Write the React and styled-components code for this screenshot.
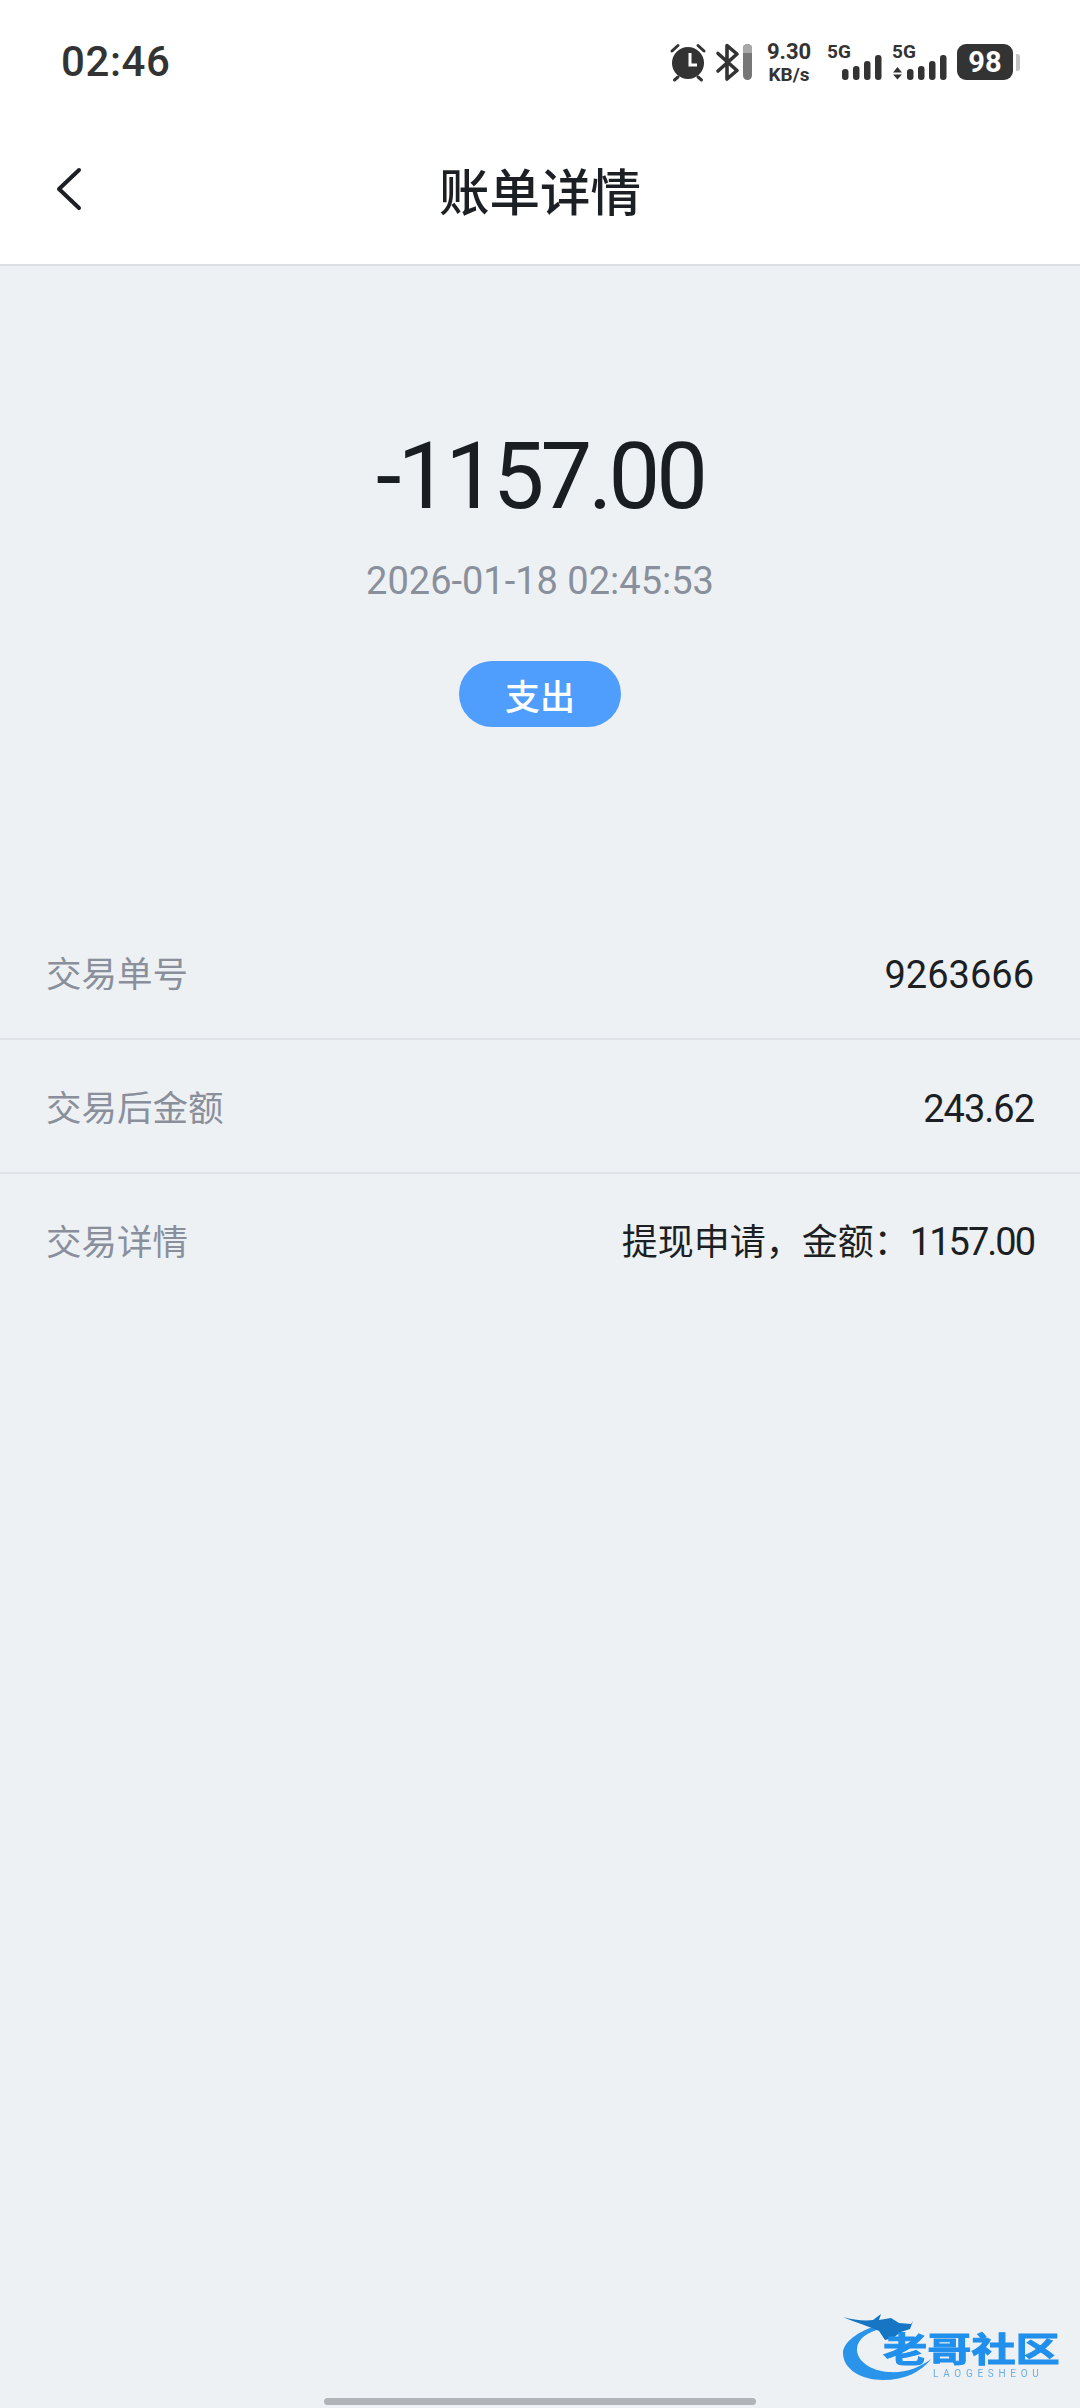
import React from "react";
import styled, { createGlobalStyle } from "styled-components";

const GlobalStyle = createGlobalStyle`
  html, body {
    margin: 0;
    padding: 0;
    background: #edf1f3;
  }
  * {
    box-sizing: border-box;
  }
`;

const FONT = `Roboto, "Noto Sans CJK SC", "Noto Sans", sans-serif`;

const Page = styled.div`
  position: relative;
  width: 1080px;
  height: 2408px;
  overflow: hidden;
  background: #edf1f3;
  font-family: ${FONT};
`;

const Header = styled.header`
  height: 266px;
  background: #fff;
  border-bottom: 2px solid #dcdfe3;
`;

const StatusBar = styled.div`
  height: 124px;
  padding: 0 67px 0 61px;
  display: flex;
  align-items: center;
  justify-content: space-between;
  color: #333;
`;

const Clock = styled.div`
  font-size: 42px;
  font-weight: 500;
  letter-spacing: 0.6px;
  line-height: 1;
`;

const StatusIcons = styled.div`
  display: flex;
  align-items: center;
  height: 40px;
`;

const Glyph = styled.svg`
  display: block;
  flex: none;
  overflow: visible;
  margin-left: ${(p) => p.$left || 0}px;
`;

const NetSpeed = styled.div`
  width: 46px;
  margin: 0 15px 0 14px;
  display: flex;
  flex-direction: column;
  align-items: center;
  font-weight: 700;
  line-height: 1;
  span:first-child {
    font-size: 22px;
    margin-bottom: 2px;
  }
  span:last-child {
    font-size: 19px;
  }
`;

const SignalLabel = styled.text`
  font-family: ${FONT};
  font-size: 19px;
  font-weight: 700;
  fill: #333;
`;

const Battery = styled.div`
  position: relative;
  width: 56px;
  height: 36px;
  border-radius: 9px;
  background: #333;
  color: #fff;
  font-size: 29px;
  font-weight: 700;
  display: flex;
  align-items: center;
  justify-content: center;
  margin-left: 9px;
  &::after {
    content: "";
    position: absolute;
    right: -7px;
    top: 10px;
    width: 4px;
    height: 17px;
    border-radius: 0 3px 3px 0;
    background: #c4c4c4;
  }
`;

const NavBar = styled.div`
  position: relative;
  height: 140px;
  padding-bottom: 11px;
  display: flex;
  align-items: center;
  justify-content: center;
`;

const BackButton = styled.svg`
  position: absolute;
  left: 56px;
  top: 43px;
`;

const Title = styled.h1`
  margin: 0;
  font-size: 50.5px;
  font-weight: 500;
  color: #1c1f23;
`;

const Summary = styled.section`
  padding-top: 156px;
  height: 640px;
  display: flex;
  flex-direction: column;
  align-items: center;
`;

const Amount = styled.div`
  font-size: 92px;
  line-height: 110px;
  color: #191e23;
  letter-spacing: -4px;
`;

const DateText = styled.div`
  margin-top: 25px;
  font-size: 38px;
  line-height: 48px;
  color: #8a8f9c;
`;

const TypeTag = styled.div`
  margin-top: 56px;
  width: 162px;
  height: 66px;
  border-radius: 33px;
  background: #4f9dfc;
  color: #fff;
  font-size: 35px;
  font-weight: 500;
  display: flex;
  align-items: center;
  justify-content: center;
`;

const Rows = styled.section`
  display: flex;
  flex-direction: column;
`;

const Row = styled.div`
  height: 134px;
  padding: 5px 46px 0;
  display: flex;
  align-items: center;
  justify-content: space-between;
  border-bottom: 2px solid ${(p) => (p.$last ? "transparent" : "#dfe3e8")};
`;

const RowLabel = styled.span`
  color: #8a8f9c;
  font-size: 35.5px;
  line-height: 44px;
`;

const RowValue = styled.span`
  color: #1c1f23;
  font-size: 38px;
  line-height: 44px;
  letter-spacing: ${(p) => p.$spacing || 0}px;
`;

const ValuePrefix = styled.span`
  font-size: 36px;
  letter-spacing: 0;
`;

const Watermark = styled.div`
  position: absolute;
  left: 843px;
  top: 2313px;
  width: 222px;
  height: 70px;
  filter: blur(0.7px);
`;

const DragonSvg = styled.svg`
  position: absolute;
  left: 0;
  top: 0;
`;

const LogoText = styled.div`
  position: absolute;
  left: 40px;
  top: 20px;
  font-size: 34px;
  line-height: 34px;
  font-weight: 700;
  white-space: nowrap;
  transform: scaleX(1.3);
  transform-origin: left center;
  color: #2190ec;
  -webkit-text-stroke: 1px #2190ec;
`;

const LogoSub = styled.div`
  position: absolute;
  left: 90px;
  top: 56px;
  font-size: 10px;
  line-height: 10px;
  letter-spacing: 4.7px;
  color: #6aaee6;
  white-space: nowrap;
`;

const HomeBar = styled.div`
  position: absolute;
  left: 324px;
  bottom: 3px;
  width: 432px;
  height: 7px;
  border-radius: 3.5px;
  background: #b0b4b8;
`;

const AlarmIcon = () => (
  <Glyph width="36" height="38" viewBox="0 0 36 38">
    <circle cx="17" cy="20" r="16" fill="#333" />
    <path d="M19 10v12h7" fill="none" stroke="#fff" strokeWidth="3" />
    <path d="M1 8 7 2.500M33 8 27 2.500M7 34 3.500 37M27 34l3.500 3" fill="none" stroke="#333" strokeWidth="3" strokeLinecap="round" />
  </Glyph>
);

const BluetoothIcon = () => (
  <Glyph $left={9} width="24" height="38" viewBox="0 0 24 38">
    <path d="M2 10.500 21 27.500 11 36V2.500l10 8.500L2 28" fill="none" stroke="#333" strokeWidth="3.600" strokeLinejoin="round" strokeLinecap="round" />
  </Glyph>
);

const LevelBar = () => (
  <Glyph $left={3} width="9" height="36" viewBox="0 0 9 36">
    <rect width="9" height="36" rx="4.500" fill="#777" />
    <path d="M0 9V4.500a4.500 4.500 0 0 1 9 0V9z" fill="#a8a8a8" />
  </Glyph>
);

const bars = [
  { x: 0, h: 11 },
  { x: 11, h: 14 },
  { x: 22, h: 19 },
  { x: 33, h: 25 },
];

const SignalIcon = ({ arrows, left }) => (
  <Glyph $left={left} width={arrows ? 56 : 55} height="38" viewBox={arrows ? "0 0 56 38" : "0 0 55 38"}>
    <SignalLabel x="0" y="15">5G</SignalLabel>
    {arrows && <path d="M5.500 24 10 29.500H1zM5.500 36.500 1 31.500h9z" fill="#333" />}
    {bars.map((b) => (
      <rect key={b.x} x={15 + b.x} y={37 - b.h} width="6.500" height={b.h} rx="3" fill="#333" />
    ))}
  </Glyph>
);

const DragonLogo = () => (
  <DragonSvg width="100" height="70" viewBox="0 0 100 70">
    <path
      d="M36 12C14 18 0 30 0 40c0 16 18 27 40 27 22 0 38-8 48-21-12 9-26 14-42 13C28 58 13 48 14 35 15 26 24 19 38 16z"
      fill="#2a94ea"
    />
    <path
      d="M0 4C10 7 22 8 30 7L38 1 36 7 48 5l8 5 12 1 2-3-3 8-9 3-8 6-8 2-6-9C28 14 14 10 0 4z"
      fill="#1676c4"
    />
  </DragonSvg>
);

const App = () => {
  return (
    <Page>
      <GlobalStyle />
      <Header>
        <StatusBar>
          <Clock>02:46</Clock>
          <StatusIcons>
            <AlarmIcon />
            <BluetoothIcon />
            <LevelBar />
            <NetSpeed>
              <span>9.30</span>
              <span>KB/s</span>
            </NetSpeed>
            <SignalIcon />
            <SignalIcon arrows left={10} />
            <Battery>98</Battery>
          </StatusIcons>
        </StatusBar>
        <NavBar>
          <BackButton width="26" height="44" viewBox="0 0 26 44">
            <path d="M23 3 3 22l20 19" fill="none" stroke="#1c1f23" strokeWidth="4" strokeLinecap="round" strokeLinejoin="round" />
          </BackButton>
          <Title>账单详情</Title>
        </NavBar>
      </Header>
      <Summary>
        <Amount>-1157.00</Amount>
        <DateText>2026-01-18 02:45:53</DateText>
        <TypeTag>支出</TypeTag>
      </Summary>
      <Rows>
        <Row>
          <RowLabel>交易单号</RowLabel>
          <RowValue>9263666</RowValue>
        </Row>
        <Row>
          <RowLabel>交易后金额</RowLabel>
          <RowValue $spacing={-1}>243.62</RowValue>
        </Row>
        <Row $last>
          <RowLabel>交易详情</RowLabel>
          <RowValue $spacing={-2}>
            <ValuePrefix>提现申请，金额：</ValuePrefix>1157.00
          </RowValue>
        </Row>
      </Rows>
      <Watermark>
        <DragonLogo />
        <LogoText>老哥社区</LogoText>
        <LogoSub>LAOGESHEOU</LogoSub>
      </Watermark>
      <HomeBar />
    </Page>
  );
};

export default App;
